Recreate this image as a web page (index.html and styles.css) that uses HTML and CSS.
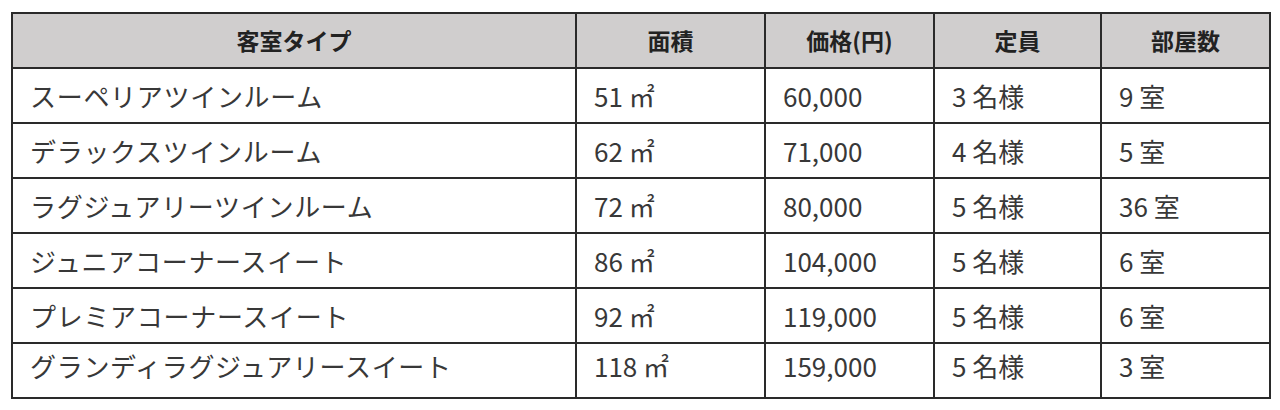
FILE: index.html
```html
<!DOCTYPE html>
<html lang="ja">
<head>
<meta charset="utf-8">
<link rel="stylesheet" href="styles.css">
</head>
<body>
<table class="rooms">
  <colgroup>
    <col class="c-type"><col class="c-area"><col class="c-price"><col class="c-cap"><col class="c-num">
  </colgroup>
  <thead>
    <tr><th>客室タイプ</th><th>面積</th><th>価格(円)</th><th>定員</th><th>部屋数</th></tr>
  </thead>
  <tbody>
    <tr><td class="name">スーペリアツインルーム</td><td>51 ㎡</td><td>60,000</td><td>3 名様</td><td>9 室</td></tr>
    <tr><td class="name">デラックスツインルーム</td><td>62 ㎡</td><td>71,000</td><td>4 名様</td><td>5 室</td></tr>
    <tr><td class="name">ラグジュアリーツインルーム</td><td>72 ㎡</td><td>80,000</td><td>5 名様</td><td>36 室</td></tr>
    <tr><td class="name">ジュニアコーナースイート</td><td>86 ㎡</td><td>104,000</td><td>5 名様</td><td>6 室</td></tr>
    <tr><td class="name">プレミアコーナースイート</td><td>92 ㎡</td><td>119,000</td><td>5 名様</td><td>6 室</td></tr>
    <tr class="last"><td class="name">グランディラグジュアリースイート</td><td>118 ㎡</td><td>159,000</td><td>5 名様</td><td>3 室</td></tr>
  </tbody>
</table>
</body>
</html>
```
FILE: styles.css
```css
html, body {
  margin: 0;
  padding: 0;
  background: #ffffff;
}
body {
  padding: 12px 0 0 11px;
  font-family: "Noto Sans CJK JP", "Noto Sans", sans-serif;
  color: #333333;
}
.rooms {
  border-collapse: collapse;
  table-layout: fixed;
  width: 1258px;
  border: 2px solid #2a2a2a;
}
.c-type { width: 564px; }
.c-area { width: 189px; }
.c-price { width: 169px; }
.c-cap { width: 167px; }
.c-num { width: 169px; }
.rooms th, .rooms td {
  border: 2px solid #2a2a2a;
  height: 55px;
  padding: 0;
  box-sizing: border-box;
  white-space: nowrap;
}
.rooms th {
  background: #d0cece;
  font-weight: 700;
  font-size: 23px;
  color: #222222;
  text-align: center;
  line-height: 1;
}
.rooms td {
  font-size: 26px;
  font-weight: 400;
  text-align: left;
  padding-left: 17px;
  line-height: 1;
  color: #383838;
}
.rooms td.name {
  letter-spacing: 0.7px;
}
.rooms tr.last td {
  padding-bottom: 10px;
}
```
